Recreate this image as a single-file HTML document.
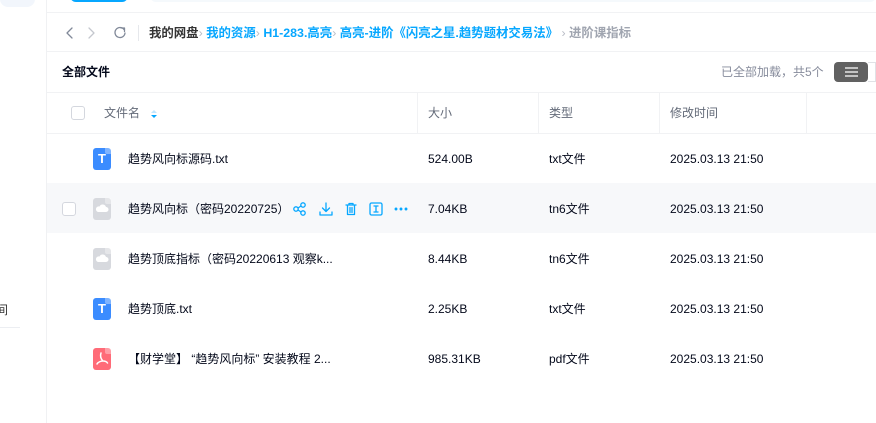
<!DOCTYPE html>
<html><head><meta charset="utf-8"><style>
*{margin:0;padding:0;box-sizing:border-box}
body{width:876px;height:423px;overflow:hidden;background:#fff;font-family:"Liberation Sans","Noto Sans CJK SC",sans-serif;font-size:12px;color:#03081a;position:relative}
.abs{position:absolute}
.hl{position:absolute;height:1px;background:#f1f2f4}
.t{position:absolute;white-space:nowrap;line-height:16px}
.cb{position:absolute;width:14px;height:14px;border:1px solid #d4d7de;border-radius:3px;background:#fff}
.ic{position:absolute;width:18px;height:22px;border-radius:3px}
.ic::before{content:"";position:absolute;right:0;top:0;width:6px;height:6px;background:rgba(255,255,255,.35);border-bottom-left-radius:2px}
</style></head><body>
<div class="abs" style="left:0;top:-10px;width:35px;height:17px;background:#f2f6fc;border-radius:8px"></div>
<div class="t" style="left:-4px;top:302px;font-size:12px;color:#333">间</div>
<div class="abs" style="left:0;top:327px;width:20px;height:1px;background:#eceef2"></div>
<div class="abs" style="left:46px;top:0;width:1px;height:423px;background:#f0f1f3"></div>
<div class="abs" style="left:70px;top:-6px;width:58px;height:8px;background:#06a7ff;border-radius:0 0 6px 6px"></div>
<div class="abs" style="left:150px;top:-6px;width:726px;height:8px;background:#f5f9fc;border-radius:0 0 6px 6px"></div>
<div class="hl" style="left:47px;top:12px;width:829px"></div>
<svg class="abs" style="left:63px;top:25px" width="70" height="16" viewBox="0 0 70 16" fill="none" stroke-width="1.3" stroke-linecap="round" stroke-linejoin="round">
<path d="M9 3L4 8l5 5" stroke="#818999"/>
<path d="M26 3l5 5-5 5" stroke="#c4c7ce"/>
<path d="M61 4.5A5 5 0 1 0 62 8" stroke="#818999"/><path d="M58 3h3.5v3.5" stroke="#818999"/>
</svg>
<div class="abs" style="left:138px;top:25px;width:1px;height:16px;background:#e6e8ec"></div>
<div class="t" style="left:149px;top:25px;font-size:12.4px;font-weight:bold;color:#333">我的网盘<span style="color:#b8bcc6;font-weight:normal">›</span> <span style="color:#06a7ff">我的资源</span><span style="color:#b8bcc6;font-weight:normal">›</span> <span style="color:#06a7ff">H1-283.高亮</span><span style="color:#b8bcc6;font-weight:normal">›</span> <span style="color:#06a7ff">高亮-进阶《闪亮之星.趋势题材交易法》</span> <span style="color:#b8bcc6;font-weight:normal">›</span> <span style="color:#a0a5b0">进阶课指标</span></div>
<div class="hl" style="left:47px;top:51px;width:829px"></div>
<div class="t" style="left:62px;top:64px;font-weight:bold;color:#03081a">全部文件</div>
<div class="t" style="left:721px;top:64px;color:#878c9c">已全部加载，共5个</div>
<div class="abs" style="left:834px;top:62px;width:34px;height:20px;background:#616161;border-radius:4px"></div>
<svg class="abs" style="left:845px;top:67px" width="13" height="10"><path d="M0 1h13M0 5h13M0 9h13" stroke="#fff" stroke-width="1.2"/></svg>
<div class="abs" style="left:868px;top:62px;width:8px;height:20px;border:1px solid #e0e2e6;border-left:none"></div>
<div class="hl" style="left:47px;top:92px;width:829px"></div>
<div class="cb" style="left:71px;top:106px"></div>
<div class="t" style="left:104px;top:105px;color:#636a78">文件名</div>
<svg class="abs" style="left:150px;top:109px" width="8" height="10"><path d="M1 4l3-3 3 3z" fill="#c0e6ff"/><path d="M1 6l3 3 3-3z" fill="#06a7ff"/></svg>
<div class="abs" style="left:417px;top:92px;width:1px;height:41px;background:#f1f2f4"></div>
<div class="abs" style="left:538px;top:92px;width:1px;height:41px;background:#f1f2f4"></div>
<div class="abs" style="left:659px;top:92px;width:1px;height:41px;background:#f1f2f4"></div>
<div class="abs" style="left:806px;top:92px;width:1px;height:41px;background:#f1f2f4"></div>
<div class="t" style="left:428px;top:105px;color:#636a78">大小</div>
<div class="t" style="left:549px;top:105px;color:#636a78">类型</div>
<div class="t" style="left:670px;top:105px;color:#636a78">修改时间</div>
<div class="hl" style="left:47px;top:133px;width:829px"></div>
<div class="abs" style="left:47px;top:183px;width:829px;height:50px;background:#f7f8fa"></div>
<div class="cb" style="left:62px;top:202px"></div>

<div class="ic" style="left:93px;top:148px;background:#3b8cff;color:#fff;font-weight:bold;font-size:13px;text-align:center;line-height:22px">T</div>
<div class="ic" style="left:93px;top:198px;background:#d7d9de"><svg width="18" height="22" style="position:absolute;left:0;top:0"><path d="M5 14h8a2.5 2.5 0 0 0 0-5 3.5 3.5 0 0 0-6.5-.5A2.7 2.7 0 0 0 5 14z" fill="#fff"/></svg></div>
<div class="ic" style="left:93px;top:248px;background:#d7d9de"><svg width="18" height="22" style="position:absolute;left:0;top:0"><path d="M5 14h8a2.5 2.5 0 0 0 0-5 3.5 3.5 0 0 0-6.5-.5A2.7 2.7 0 0 0 5 14z" fill="#fff"/></svg></div>
<div class="ic" style="left:93px;top:298px;background:#3b8cff;color:#fff;font-weight:bold;font-size:13px;text-align:center;line-height:22px">T</div>
<div class="ic" style="left:93px;top:348px;background:#ff6b78"><svg width="18" height="22" style="position:absolute;left:0;top:0" fill="none" stroke="#fff" stroke-width="1.5" stroke-linecap="round" stroke-linejoin="round"><path d="M8 5c-1 3 0 6 2 8M10 13c-2 0-5 1-6 3M10 13c1.5 0 3.5.5 4.5 2"/></svg></div>

<div class="t" style="left:128px;top:151px">趋势风向标源码.txt</div>
<div class="t" style="left:128px;top:201px">趋势风向标（密码20220725）</div>
<div class="t" style="left:128px;top:251px">趋势顶底指标（密码20220613 观察k...</div>
<div class="t" style="left:128px;top:301px">趋势顶底.txt</div>
<div class="t" style="left:128px;top:351px">【财学堂】 “趋势风向标” 安装教程 2...</div>

<svg class="abs" style="left:292px;top:201px" width="120" height="16" fill="none" stroke="#06a7ff" stroke-width="1.3" stroke-linecap="round" stroke-linejoin="round">
<circle cx="4" cy="8" r="2.2"/><circle cx="11" cy="4" r="2.2"/><circle cx="11" cy="12" r="2.2"/><path d="M6 7l3-2M6 9l3 2"/>
<path d="M34 2v8M30.5 7l3.5 3.5 3.5-3.5M28 11v3h12v-3"/>
<path d="M54 4h10M57 4V2.5h4V4M55.5 4v9.5h7V4M58 6.5v5M60 6.5v5"/>
<rect x="78" y="2" width="12" height="12" rx="1.5"/><path d="M82 5h4M84 5v6M82 11h4"/>
<circle cx="104" cy="8" r=".8" fill="#06a7ff"/><circle cx="109" cy="8" r=".8" fill="#06a7ff"/><circle cx="114" cy="8" r=".8" fill="#06a7ff"/>
</svg>

<div class="t" style="left:428px;top:151px">524.00B</div>
<div class="t" style="left:428px;top:201px">7.04KB</div>
<div class="t" style="left:428px;top:251px">8.44KB</div>
<div class="t" style="left:428px;top:301px">2.25KB</div>
<div class="t" style="left:428px;top:351px">985.31KB</div>
<div class="t" style="left:549px;top:151px">txt文件</div>
<div class="t" style="left:549px;top:201px">tn6文件</div>
<div class="t" style="left:549px;top:251px">tn6文件</div>
<div class="t" style="left:549px;top:301px">txt文件</div>
<div class="t" style="left:549px;top:351px">pdf文件</div>
<div class="t" style="left:670px;top:151px">2025.03.13 21:50</div>
<div class="t" style="left:670px;top:201px">2025.03.13 21:50</div>
<div class="t" style="left:670px;top:251px">2025.03.13 21:50</div>
<div class="t" style="left:670px;top:301px">2025.03.13 21:50</div>
<div class="t" style="left:670px;top:351px">2025.03.13 21:50</div>
</body></html>
